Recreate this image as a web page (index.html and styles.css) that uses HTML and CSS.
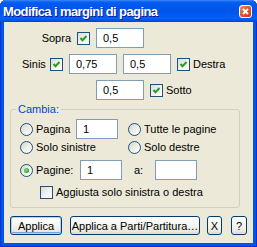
FILE: index.html
```html
<!DOCTYPE html>
<html lang="it">
<head>
    <meta charset="UTF-8">
    <title>Modifica i margini di pagina</title>
    <link rel="stylesheet" href="styles.css">
</head>
<body>
    <div class="window">
        <div class="titlebar">
            <span class="title">Modifica i margini di pagina</span>
            <span class="close">
                <svg width="11" height="11" viewBox="0 0 11 11"><path d="M3 3 L8 8 M8 3 L3 8" stroke="#fff" stroke-width="1.8" fill="none"/></svg>
            </span>
        </div>

        <div class="body">
            <div class="row row-sopra">
                <span class="lbl lbl-sopra">Sopra</span>
                <span class="cb"><svg width="11" height="11" viewBox="0 0 11 11"><path d="M2.5 5 L4.5 7.2 L8.5 3" stroke="#21a121" stroke-width="2" fill="none"/></svg></span>
                <input type="text" class="field" value="0,5">
            </div>

            <div class="row row-sinis">
                <span class="lbl lbl-sinis">Sinis</span>
                <span class="cb"><svg width="11" height="11" viewBox="0 0 11 11"><path d="M2.5 5 L4.5 7.2 L8.5 3" stroke="#21a121" stroke-width="2" fill="none"/></svg></span>
                <input type="text" class="field" value="0,75">
                <input type="text" class="field" value="0,5">
                <span class="cb"><svg width="11" height="11" viewBox="0 0 11 11"><path d="M2.5 5 L4.5 7.2 L8.5 3" stroke="#21a121" stroke-width="2" fill="none"/></svg></span>
                <span class="cb-text">Destra</span>
            </div>

            <div class="row row-sotto">
                <input type="text" class="field" value="0,5">
                <span class="cb"><svg width="11" height="11" viewBox="0 0 11 11"><path d="M2.5 5 L4.5 7.2 L8.5 3" stroke="#21a121" stroke-width="2" fill="none"/></svg></span>
                <span class="cb-text">Sotto</span>
            </div>

            <fieldset class="group">
                <legend>Cambia:</legend>

                <div class="grow grow-a">
                    <span class="opt opt-pagina"><span class="rb"></span>Pagina</span>
                    <input type="text" class="field field-small" value="1">
                    <span class="opt opt-right"><span class="rb"></span>Tutte le pagine</span>
                </div>

                <div class="grow grow-b">
                    <span class="opt opt-wide"><span class="rb"></span>Solo sinistre</span>
                    <span class="opt"><span class="rb"></span>Solo destre</span>
                </div>

                <div class="grow grow-c">
                    <span class="opt opt-pagine"><span class="rb on"></span>Pagine:</span>
                    <input type="text" class="field field-small" value="1">
                    <span class="to">a:</span>
                    <input type="text" class="field field-small" value="">
                </div>

                <div class="grow grow-d">
                    <span class="cb"></span>
                    <span class="cb-text">Aggiusta solo sinistra o destra</span>
                </div>
            </fieldset>

            <div class="buttons">
                <button class="btn btn-default">Applica</button>
                <button class="btn btn-parts">Applica a Parti/Partitura…</button>
                <button class="btn btn-x">X</button>
                <button class="btn btn-help">?</button>
            </div>
        </div>
    </div>
</body>
</html>
```

FILE: styles.css
```css
body {
    margin: 0;
    font-family: "Liberation Sans", Arial, sans-serif;
    font-size: 11px;
    color: #000;
    background-color: #fff;
}
.window {
    width: 257px;
    height: 247px;
    box-sizing: border-box;
    background-color: #0055e5;
    box-shadow: inset 0 0 0 1px #0831d9;
    border-radius: 6px 6px 0 0;
    overflow: hidden;
}
.titlebar {
    height: 22px;
    display: flex;
    align-items: center;
    background: linear-gradient(to bottom, #3c8cf8 0, #0a5ef0 2px, #0058ee 5px, #0055ea 12px, #0062fb 18px, #0050e0 21px, #0040c8 22px);
}
.title {
    padding-left: 3px;
    color: #fff;
    font-weight: bold;
    font-size: 13px;
    letter-spacing: -0.6px;
    text-shadow: 1px 1px 0 #0a1a8a;
}
.close {
    margin-left: auto;
    margin-right: 5px;
    width: 13px;
    height: 13px;
    box-sizing: border-box;
    border: 1px solid #fff;
    border-radius: 3px;
    background: linear-gradient(135deg, #f0926e 0, #e05a30 45%, #c83a14 100%);
    display: flex;
    align-items: center;
    justify-content: center;
}
.close svg {
    display: block;
}
.body {
    margin: 0 4px;
    height: 221px;
    background-color: #ece9d8;
    overflow: hidden;
}
.row {
    display: flex;
    align-items: center;
    height: 20px;
    margin-top: 6px;
    gap: 6px;
}
.row-sopra {
    padding-left: 37px;
}
.row-sinis {
    padding-left: 18px;
}
.row-sotto {
    padding-left: 92px;
}
.lbl {
    text-align: right;
    white-space: nowrap;
}
.lbl-sopra {
    width: 30px;
}
.lbl-sinis {
    width: 23px;
    margin-right: -1px;
}
.field {
    width: 48px;
    height: 20px;
    box-sizing: border-box;
    margin: 0;
    padding: 0 0 0 6px;
    border: 1px solid #7f9db9;
    background-color: #fff;
    font-family: "Liberation Sans", Arial, sans-serif;
    font-size: 11px;
    color: #000;
    outline: none;
}
.field-small {
    width: 42px;
}
.cb {
    width: 13px;
    height: 13px;
    box-sizing: border-box;
    flex-shrink: 0;
    border: 1px solid #1c5180;
    background: linear-gradient(135deg, #dcdcd7 0, #f4f4f0 60%, #fff 100%);
}
.cb svg {
    display: block;
}
.row .cb-text {
    margin-left: -3px;
}
.group {
    margin: 3px 0 0 6px;
    width: 230px;
    box-sizing: border-box;
    padding: 3px 0 8px 0;
    border: 1px solid #d0d0bf;
    border-radius: 3px;
    min-width: 0;
}
.group legend {
    margin-left: 5px;
    padding: 0 2px;
    color: #0046d5;
    line-height: 13px;
}
.grow {
    display: flex;
    align-items: center;
    margin-left: 9px;
}
.grow-a {
    height: 20px;
}
.grow-b {
    height: 14px;
    margin-top: 1px;
}
.grow-c {
    height: 20px;
    margin-top: 6px;
}
.grow-d {
    height: 14px;
    margin-top: 5px;
    margin-left: 29px;
}
.grow-d .cb-text {
    margin-left: 3px;
}
.opt {
    display: flex;
    align-items: center;
    white-space: nowrap;
}
.opt-pagina {
    width: 56px;
}
.opt-right {
    margin-left: 10px;
}
.opt-wide {
    width: 108px;
}
.opt-pagine {
    width: 60px;
}
.to {
    margin-left: 12px;
    width: 21px;
}
.rb {
    position: relative;
    width: 13px;
    height: 13px;
    box-sizing: border-box;
    margin-right: 3px;
    flex-shrink: 0;
    border: 1px solid #1c5180;
    border-radius: 50%;
    background: linear-gradient(135deg, #d6d5cc 0, #f0f0ea 55%, #fff 100%);
}
.rb.on::after {
    content: "";
    position: absolute;
    left: 3px;
    top: 3px;
    width: 5px;
    height: 5px;
    border-radius: 50%;
    background: radial-gradient(circle at 40% 40%, #8de08b 0, #2fb52c 60%, #1e8f1c 100%);
}
.buttons {
    display: flex;
    align-items: center;
    margin-top: 8px;
    padding-left: 6px;
}
.btn {
    height: 19px;
    margin: 0;
    padding: 0;
    box-sizing: border-box;
    border: 1px solid #003c74;
    border-radius: 3px;
    background: linear-gradient(to bottom, #fff 0, #f5f4ef 50%, #ebe8dc 85%, #d6d0c5 100%);
    box-shadow: inset 0 -1px 0 #e3dfd0;
    font-family: "Liberation Sans", Arial, sans-serif;
    font-size: 11px;
    color: #000;
    white-space: nowrap;
    overflow: visible;
}
.btn-default {
    width: 52px;
    box-shadow: inset 0 0 0 1px #b8cff8, inset 0 -1px 0 1px #7aa0ea;
}
.btn-parts {
    width: 130px;
    margin-left: 8px;
}
.btn-x {
    width: 15px;
    margin-left: 7px;
}
.btn-help {
    width: 16px;
    margin-left: 9px;
}
```
